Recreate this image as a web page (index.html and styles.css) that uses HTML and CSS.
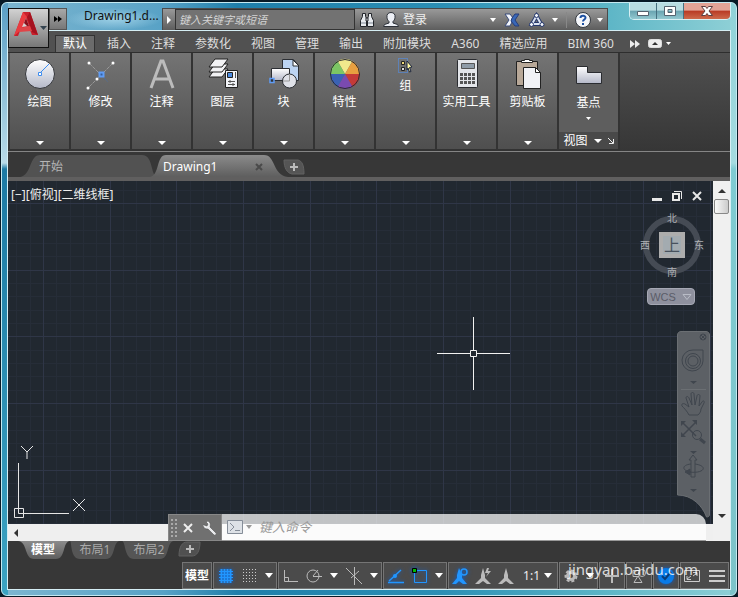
FILE: index.html
```html
<!DOCTYPE html>
<html lang="zh-CN">
<head>
    <meta charset="utf-8">
    <title>Drawing1.dwg</title>
    <link rel="stylesheet" href="styles.css">
</head>
<body>
<div class="window">
    <header class="titlebar">
        <button class="app-btn" aria-label="应用程序">
            <svg width="38" height="38" viewBox="0 0 38 38">
                <path d="M4 27 13 3h7l8 23h-6l-2-5-10 1-2 5z" fill="#c9202c"/>
                <path d="m13 3 4 5-5 12-8 7z" fill="#ea3c40"/>
                <path d="m20 3-3 5 5 15 6 3z" fill="#a5121f"/>
                <path d="m16 9-4 9 7-1z" fill="#d8d0d0"/>
                <path d="m16 9-2 5 3 3 2 0z" fill="#8c101c"/>
                <path d="m10 19 10-2 2 5-13 1z" fill="#e04448"/>
                <path d="M30 17h7l-3.500 4z" fill="#34434f"/>
            </svg>
        </button>
        <button class="quick" aria-label="快速访问">
            <svg width="8" height="8"><path d="M0 1v6l4-3zM4 1v6l4-3z" fill="#000"/></svg>
        </button>
        <h1 class="title">Drawing1.d...</h1>
        <div class="info">
            <button class="expand" aria-label="展开搜索"><svg width="6" height="10"><path d="M1 1v8l4-4z" fill="#fff"/></svg></button>
            <input class="search" type="text" placeholder="键入关键字或短语" aria-label="搜索">
            <button aria-label="查找">
                <svg width="16" height="16" viewBox="0 0 16 16" fill="#e8ebef" stroke="#22252a">
                    <path d="M3.500 1.500h3v3l1 2v8h-6v-6l2-4zM9.500 1.500h3v3l2 4v6h-6v-8l1-2z"/>
                    <path d="M2 11h5M9 11h5" stroke="#7e8794"/><path d="M7 6h2v3H7z"/>
                </svg>
            </button>
            <button class="login">
                <svg width="16" height="16" viewBox="0 0 16 16"><path d="M8 .5c3 0 4.500 2 4 5-.2 2-1 3-2 4v1.500l4.500 1.500 1 2H.5l1-2L6 11V9.500c-1-1-1.800-2-2-4-.5-3 1-5 4-5z" fill="#eceff5" stroke="#2c3038"/></svg>
                <span>登录</span>
            </button>
            <button class="caret-end" aria-label="登录选项"><svg class="caret" width="6" height="4"><path d="M0 0h6L3 4z"/></svg></button>
            <button aria-label="Exchange">
                <svg width="16" height="14" viewBox="0 0 16 14"><path d="M1 1h5l3 4-1 4-2 4H1l4-6z" fill="#f3f6fb" stroke="#3b4c7b"/><path d="M15 1h-4L8 5l-1 3 4 5h4l-4-6z" fill="#3867b8" stroke="#263d79"/></svg>
            </button>
            <button aria-label="A360">
                <svg width="18" height="16" viewBox="0 0 18 16" fill="none"><path d="M8.500 4 4 12h9z" stroke="#27396c" stroke-width="4"/><path d="M8.500 4 4 12h9z" stroke="#dce4f2" stroke-width="2"/><g fill="#f3f6fc" stroke="#27396c"><circle cx="8.500" cy="3.500" r="2"/><circle cx="3.500" cy="12.500" r="2"/><circle cx="14" cy="12.500" r="2"/></g></svg>
                <svg class="caret" width="6" height="4"><path d="M0 0h6L3 4z"/></svg>
            </button>
            <button class="help" aria-label="帮助">
                <svg width="16" height="16" viewBox="0 0 16 16"><circle cx="8" cy="8" r="7.500" fill="#f4f6fa" stroke="#33383f"/><path d="M5.500 6c0-3 5-3 5-.2C10.500 7.500 8 7.500 8 9.500M8 11v2" stroke="#1c4fa0" stroke-width="2" fill="none"/></svg>
                <svg class="caret" width="6" height="4"><path d="M0 0h6L3 4z"/></svg>
            </button>
        </div>
        <div class="win-btns">
            <button aria-label="最小化"><svg width="14" height="12"><path d="M1.500 6.500h11v4h-11z" fill="#fff" stroke="#54626f"/></svg></button>
            <button aria-label="还原"><svg width="14" height="12"><path d="M1.500 1.500h11v9h-11zM5 4.500v3h4v-3z" fill="#fff" fill-rule="evenodd" stroke="#54626f"/></svg></button>
            <button class="win-close" aria-label="关闭"><svg width="14" height="12"><path d="M1.500 1.500h4L7 3.500l1.500-2h4L9 6l3.500 4.500h-4L7 8.500l-1.500 2h-4L5 6z" fill="#fff" stroke="#5d3f40"/></svg></button>
        </div>
    </header>

    <div class="client">
        <nav class="ribbon-tabs">
            <button class="on">默认</button>
            <button>插入</button>
            <button>注释</button>
            <button>参数化</button>
            <button>视图</button>
            <button>管理</button>
            <button>输出</button>
            <button>附加模块</button>
            <button>A360</button>
            <button>精选应用</button>
            <button>BIM 360</button>
            <button class="bare" aria-label="更多"><svg width="10" height="8"><path d="M0 0v8l5-4zM5 0v8l5-4z" fill="#eee"/></svg></button>
            <button class="bare" aria-label="最小化功能区">
                <svg width="14" height="9"><rect x=".5" y=".5" width="13" height="8" rx="2" fill="#eee" stroke="#ddd"/><path d="M4 6h6L7 3z" fill="#333"/></svg>
                <svg class="caret" width="5" height="3"><path d="M0 0h5L2.500 3z"/></svg>
            </button>
        </nav>

        <section class="ribbon">
            <button class="panel">
                <svg width="32" height="32" viewBox="0 0 32 32">
                    <defs><linearGradient id="disc" x2="0" y2="1"><stop stop-color="#fff"/><stop offset="1" stop-color="#b4b8c8"/></linearGradient></defs>
                    <circle cx="16" cy="16" r="14.500" fill="url(#disc)" stroke="#34363a"/><path d="m16 15 9-9" stroke="#3c8cf0"/><path d="M14.500 14.500h3v3h-3z" fill="#fff" stroke="#3c8cf0"/>
                </svg>
                <span>绘图</span>
                <svg class="caret" width="8" height="4"><path d="M0 0h8L4 4z"/></svg>
            </button>
            <button class="panel">
                <svg width="32" height="32" viewBox="0 0 32 32">
                    <path d="m4 5 12 12M28 5 3 30" stroke="#999" stroke-dasharray="4 1"/><path d="m16 17 7 7" stroke="#3a6fb8" stroke-dasharray="1 1"/>
                    <path d="M14.500 14.500h4v4h-4z" fill="#38609c" stroke="#5f9cf5" stroke-width="2"/><g fill="#fff"><circle cx="4" cy="5" r="1.500"/><circle cx="28" cy="5" r="1.500"/><circle cx="12" cy="21" r="1.500"/><circle cx="3" cy="30" r="1.500"/></g>
                </svg>
                <span>修改</span>
                <svg class="caret" width="8" height="4"><path d="M0 0h8L4 4z"/></svg>
            </button>
            <button class="panel">
                <svg width="32" height="32" viewBox="0 0 32 32" fill="none" stroke="#bcbcbc" stroke-width="3"><path d="m5 30 10-27h2l10 27M9 21h14"/></svg>
                <span>注释</span>
                <svg class="caret" width="8" height="4"><path d="M0 0h8L4 4z"/></svg>
            </button>
            <button class="panel">
                <svg width="32" height="32" viewBox="0 0 32 32" stroke="#222">
                    <g fill="#f2f2f4"><path d="m2 19 6-8h13l-6 8z"/><path d="m2 14 6-8h13l-6 8z"/><path d="m2 9 6-8h13l-6 8z"/></g>
                    <path d="M18.500 12.500h12v17h-12z" fill="#f1f3f7"/><path d="M20.500 14.500h5v5h-5z" fill="#4a8ae0"/><path d="M28.500 14v6M21 23.500h7M21 26.500h7M23 22v3M26 25v3" stroke="#555"/>
                </svg>
                <span>图层</span>
                <svg class="caret" width="8" height="4"><path d="M0 0h8L4 4z"/></svg>
            </button>
            <button class="panel">
                <svg width="32" height="32" viewBox="0 0 32 32" stroke="#2b2e33">
                    <path d="M14.500 1.500h11l5 6v15h-16z" fill="#bcd4f3"/><path d="M25 2v6h6z" fill="#fff"/><path d="M3.500 10.500h18v12h-18z" fill="url(#disc)"/>
                    <circle cx="21.500" cy="23" r="7" fill="#dfe1e8"/><path d="M21.500 16v7H15" stroke="#999" fill="none"/><path d="M2 20.500h4v4H2z" fill="#333" stroke="#5f9cf5" stroke-width="1.500"/>
                </svg>
                <span>块</span>
                <svg class="caret" width="8" height="4"><path d="M0 0h8L4 4z"/></svg>
            </button>
            <button class="panel">
                <svg width="32" height="32" viewBox="0 0 32 32">
                    <path d="M16 16 8.500 3h15z" fill="#f1e98c"/><path d="M16 16 23.500 3A15 15 0 0 1 31 16z" fill="#e8a040"/><path d="M16 16h15a15 15 0 0 1-7.500 13z" fill="#c43a38"/>
                    <path d="m16 16 7.500 13a15 15 0 0 1-15 0z" fill="#7a4ab0"/><path d="M16 16 8.500 29A15 15 0 0 1 1 16z" fill="#3a62b4"/><path d="M16 16H1A15 15 0 0 1 8.500 3z" fill="#7cc664"/>
                    <path d="M8.500 3a15 15 0 0 1 15 0z" fill="#f1e98c"/><circle cx="16" cy="16" r="14.500" fill="none" stroke="#2c2c30"/>
                </svg>
                <span>特性</span>
                <svg class="caret" width="8" height="4"><path d="M0 0h8L4 4z"/></svg>
            </button>
            <button class="panel">
                <svg width="16" height="16" viewBox="0 0 16 16">
                    <path d="M.5.500h9v14h-9z" fill="none" stroke="#4d94ff" stroke-dasharray="1 1"/><path d="M3.500 3.500h3v3h-3z" fill="#f0d978" stroke="#222"/><path d="M3.500 9.500h3v3h-3z" fill="#ddd" stroke="#222"/>
                    <path d="m9 3 5 6-2.500.5 1.500 4-1.500.5-1.500-4L9 12z" fill="#fff7a0" stroke="#1c2540"/>
                </svg>
                <span>组</span>
                <svg class="caret" width="8" height="4"><path d="M0 0h8L4 4z"/></svg>
            </button>
            <button class="panel">
                <svg width="32" height="32" viewBox="0 0 32 32">
                    <rect x="6.500" y="1.500" width="20" height="28" rx="1" fill="#e4e6ea" stroke="#2a2c30"/><path d="M10.500 5.500h13v5h-13z" fill="#8f9ca8" stroke="#555"/>
                    <path d="M9 16.500h15M9 20.500h15M9 24.500h15" stroke="#555" stroke-width="3" stroke-dasharray="3 1"/>
                </svg>
                <span>实用工具</span>
                <svg class="caret" width="8" height="4"><path d="M0 0h8L4 4z"/></svg>
            </button>
            <button class="panel">
                <svg width="32" height="32" viewBox="0 0 32 32" stroke="#222">
                    <path d="M4.500 3.500h21v24h-21z" fill="#b8a898"/><path d="M9.500 4.500v-2h3v-1h5v1h3v2z" fill="#fff"/><path d="M11.500 9.500h12l5 5v16h-17z" fill="#f0f1f5"/><path d="M23.500 9.500v5h5z" fill="#fff"/>
                </svg>
                <span>剪贴板</span>
                <svg class="caret" width="8" height="4"><path d="M0 0h8L4 4z"/></svg>
            </button>
            <div class="panel view-panel">
                <button class="base">
                    <svg width="28" height="20" viewBox="0 0 28 20"><path d="M1.500 1.500h11v6h14v11h-25z" fill="url(#disc)" stroke="#2a2c30"/></svg>
                    <span>基点</span>
                    <svg class="caret" width="5" height="3"><path d="M0 0h5L2.500 3z"/></svg>
                </button>
                <button class="view-foot">
                    <span>视图</span>
                    <svg class="caret" width="8" height="4"><path d="M0 0h8L4 4z"/></svg>
                    <svg width="6" height="6"><path d="m0 0 5 5M5.500 1v4.500H1" stroke="#eee" fill="none"/></svg>
                </button>
            </div>
        </section>

        <nav class="doc-tabs">
            <button class="doc">
                <svg width="138" height="22" viewBox="0 0 138 22"><path d="M0 22C12 20 9 0 20 0h102c12 0 8 22 16 22z" fill="#525252"/></svg>
                <span>开始</span>
            </button>
            <button class="doc on">
                <svg width="138" height="22" viewBox="0 0 138 22"><defs><linearGradient id="tab" x2="0" y2="1"><stop stop-color="#8b8b8b"/><stop offset="1" stop-color="#5e5e5e"/></linearGradient></defs><path d="M0 22C10 20 6 0 16 0h98c12 0 8 20 24 22z" fill="url(#tab)"/></svg>
                <span>Drawing1</span>
                <svg class="x" width="8" height="8"><path d="m1 1 6 6M7 1 1 7" stroke="#4a4a4a" stroke-width="2"/></svg>
            </button>
            <button class="add" aria-label="新图形">
                <svg width="22" height="16" viewBox="0 0 22 16"><path d="M1 1h14c4 1 6 5 6 14H9C4 14 1 9 1 1z" fill="#555" stroke="#626262"/><path d="M11 4v8M7 8h8" stroke="#bbb" stroke-width="2"/></svg>
            </button>
        </nav>

        <main class="work">
            <div class="canvas">
                <svg class="grid" width="100%" height="100%">
                    <defs>
                        <pattern id="grid" x="35" y="22" width="200" height="200" patternUnits="userSpaceOnUse">
                            <path d="M13.500 0v200M27.500 0v200M40.500 0v200M53.500 0v200M80.500 0v200M93.500 0v200M107.500 0v200M120.500 0v200M147.500 0v200M160.500 0v200M173.500 0v200M187.500 0v200M0 13.500h200M0 27.500h200M0 40.500h200M0 53.500h200M0 80.500h200M0 93.500h200M0 107.500h200M0 120.500h200M0 147.500h200M0 160.500h200M0 173.500h200M0 187.500h200" stroke="#262d38"/>
                            <path d="M.5 0v200M67.500 0v200M133.500 0v200M0 .5h200M0 67.500h200M0 133.500h200" stroke="#2f3647"/>
                        </pattern>
                    </defs>
                    <rect width="100%" height="100%" fill="url(#grid)"/>
                </svg>
                <div class="vp-label"><button>[−]</button><button>[俯视]</button><button>[二维线框]</button></div>
                <div class="vp-btns">
                    <button aria-label="最小化视口"><svg width="12" height="12"><path d="M1 8h10v3H1z" fill="#e8e8e8"/></svg></button>
                    <button aria-label="还原视口"><svg width="12" height="12" fill="none" stroke="#e8e8e8"><path d="M2 4h6v6H2z" stroke-width="2"/><path d="M3 1.500h7.500V9"/></svg></button>
                    <button aria-label="关闭视口"><svg width="12" height="12"><path d="m2 2 8 8M10 2l-8 8" stroke="#e8e8e8" stroke-width="2"/></svg></button>
                </div>
                <div class="viewcube">
                    <svg width="66" height="66" viewBox="0 0 66 66"><circle cx="33" cy="33" r="26" fill="none" stroke="#454b54" stroke-width="6"/></svg>
                    <span class="north">北</span><span class="west">西</span><button>上</button><span class="east">东</span><span class="south">南</span>
                </div>
                <button class="wcs"><span>WCS</span><svg width="10" height="6"><path d="M1 .5h8l-4 5z" fill="none" stroke="#b9bcc6"/></svg></button>
                <svg class="cross" width="74" height="74" viewBox="0 0 74 74" fill="none" stroke="#f2f2f2"><path d="M0 36.500h33M40 36.500h33M36.500 0v33M36.500 40v33M33.500 33.500h6v6h-6z"/></svg>
                <svg class="ucs" width="76" height="74" viewBox="0 0 76 74" fill="none" stroke="#e6e6e6"><path d="M.5 63.500h9v9h-9zM4.500 18v50.500H55M7 1l6 6 6-6M13 7v7M59 54l12 12M71 54 59 66"/></svg>
            </div>
            <div class="vscroll">
                <svg width="8" height="5"><path d="M0 5h8L4 1z" fill="#333"/></svg>
                <div class="thumb"></div>
                <svg class="down" width="8" height="5"><path d="M0 0h8L4 4z" fill="#333"/></svg>
            </div>
            <div class="hscroll"><svg width="5" height="8"><path d="M5 0v8L1 4z" fill="#333"/></svg></div>

            <svg class="navbar" width="33" height="187" viewBox="0 0 33 187" fill="none" stroke="#40464e">
                <path d="M.5 164V4C.5 2 2 .5 4 .5h25c2 0 3.500 1.500 3.500 3.500v180c0 1-1 2-3 2-4-11-14-22-29-22z" fill="#5c6065" stroke="#6b6f73"/>
                <circle cx="26" cy="6" r="3"/><path d="m24 4 4 4M28 4l-4 4"/><path d="M4 58.500h25" stroke="#6b6f73"/>
                <path d="M16 19h10v11a10.500 10.500 0 1 1-10-11z"/><circle cx="16" cy="30" r="7.500"/><circle cx="16" cy="30" r="5"/>
                <path d="M13 50h7l-3.500 3zM13 120h7l-3.500 3zM13 158h7l-3.500 3z" fill="#40464e" stroke="none"/>
                <path d="M12 84c-2-4-5-7-7-9-1-2 1-3 3-2l4 3-3-9c0-2 2-2 3 0l3 7-1-11c0-2 3-2 3 0l1 11 2-9c0-2 3-2 3 0l-1 10 3-4c1-2 3-1 2 1l-3 6c0 3-2 5-3 6z"/>
                <path d="m6 92 13 13M19 91 6 104" stroke-width="1.500"/><path d="M4 95v-5h5zM15 89h5v5zM4 101v5h5z" fill="#40464e" stroke="none"/><circle cx="20" cy="104" r="4.500"/><path d="m23 108 5 4" stroke-width="3"/>
                <path d="M14 146v-17h-2l4-5 4 5h-2v17z"/><path d="M14 133c-10 1-9 7 0 8h-2M18 133c14 2 9 10-6 8"/><path d="m8 141 5-3v6z" fill="#40464e"/>
            </svg>

            <div class="cmd">
                <div class="cmd-grip">
                    <svg width="6" height="18"><path d="M1 0v18M5 0v18" stroke="#aaa" stroke-width="2" stroke-dasharray="2 2"/></svg>
                    <button aria-label="关闭命令行"><svg width="10" height="10"><path d="m1 1 8 8M9 1 1 9" stroke="#eee" stroke-width="2"/></svg></button>
                    <button aria-label="自定义"><svg width="14" height="14" viewBox="0 0 14 14"><path d="M5 0 3 1l2 2-1 2-3-1-1-1c0 4 2 5 5 5l6 6c1 1 3-1 2-2L7 6c1-3 0-5-2-6z" fill="#e9eaec" stroke="#444" stroke-width=".5"/></svg></button>
                </div>
                <div class="cmd-line">
                    <svg width="16" height="14" viewBox="0 0 16 14" fill="none" stroke="#858d98"><path d="M.5.500h15v13H.5z" fill="#dde1e6"/><path d="m3 3 4 4-4 4M8 10.500h5"/></svg>
                    <svg width="6" height="4"><path d="M0 0h6L3 4z" fill="#999"/></svg>
                    <input type="text" placeholder="键入命令" aria-label="命令">
                </div>
            </div>
        </main>

        <nav class="layouts">
            <button class="on"><svg width="52" height="18" viewBox="0 0 52 18"><path d="M0 0h52c-8 1-4 18-14 18H16C6 18 10 1 0 0z" fill="url(#tab)"/></svg><span>模型</span></button>
            <button><svg width="52" height="18" viewBox="0 0 52 18"><path d="M2 0h50c-8 1-4 18-14 18H12C2 18 4 1 2 0z" fill="#555"/></svg><span>布局1</span></button>
            <button><svg width="52" height="18" viewBox="0 0 52 18"><path d="M0 0h52c-8 1-4 18-14 18H12C2 18 4 1 0 0z" fill="#555"/></svg><span>布局2</span></button>
            <button class="add" aria-label="新建布局"><svg width="24" height="16" viewBox="0 0 24 16"><path d="M1 15C1 6 4 1 9 1h13c0 9-3 14-8 14z" fill="#505050" stroke="#606060"/><path d="M12 4v8M8 8h8" stroke="#bbb" stroke-width="2"/></svg></button>
        </nav>

        <footer class="status">
            <div class="group"><button class="model">模型</button></div>
            <div class="group">
                <button aria-label="栅格"><svg class="lit" width="18" height="16" viewBox="0 0 18 16"><path d="M4.500 1v14M7.500 1v14M10.500 1v14M13.500 1v14" stroke="#2196ff" stroke-width="2"/><path d="M2 3.500h14M2 6.500h14M2 9.500h14M2 12.500h14" stroke="#2196ff"/></svg></button>
                <button aria-label="捕捉"><svg width="16" height="16" viewBox="0 0 16 16"><path d="M1 1.500h14M1 4.500h14M1 7.500h14M1 10.500h14M1 13.500h14" stroke="#ccc" stroke-dasharray="1 2"/></svg></button>
                <button aria-label="捕捉选项"><svg class="caret" width="8" height="5"><path d="M0 0h8L4 5z"/></svg></button>
            </div>
            <div class="group">
                <button aria-label="正交"><svg width="16" height="16" viewBox="0 0 16 16" fill="none" stroke="#bbb"><path d="M2.500 2v11.500H16M2.500 9.500h4v4"/></svg></button>
                <button aria-label="极轴"><svg width="18" height="16" viewBox="0 0 18 16" fill="none" stroke="#bbb"><circle cx="8" cy="8" r="6"/><path d="M8 8.500h9M8 8l5-6"/></svg></button>
                <button aria-label="极轴选项"><svg class="caret" width="8" height="5"><path d="M0 0h8L4 5z"/></svg></button>
                <button aria-label="等轴测"><svg width="18" height="18" viewBox="0 0 18 18" fill="none" stroke="#bbb"><path d="m1 1 16 16M9.500 0v18M6 11l8-7"/></svg></button>
                <button aria-label="等轴测选项"><svg class="caret" width="8" height="5"><path d="M0 0h8L4 5z"/></svg></button>
            </div>
            <div class="group">
                <button aria-label="追踪"><svg class="lit" width="18" height="16" viewBox="0 0 18 16"><path d="M1 14.500h16M2 13 14 2" stroke="#2196ff" stroke-width="1.500"/><circle cx="8" cy="8" r="2" fill="#2196ff"/></svg></button>
                <button aria-label="对象捕捉"><svg class="lit" width="16" height="16" viewBox="0 0 16 16"><path d="M2.500 2.500h12v12h-12z" fill="none" stroke="#2196ff"/><path d="M.5.500h4v4h-4z" fill="#0b0" stroke="#000"/></svg></button>
                <button aria-label="捕捉设置"><svg class="caret" width="8" height="5"><path d="M0 0h8L4 5z"/></svg></button>
            </div>
            <div class="group">
                <button aria-label="注释可见性"><svg class="lit" width="16" height="18" viewBox="0 0 16 18"><path d="M7 1 5 8v3l-5 6h4l3-3 4 3h4l-5-6V8z" fill="#2196ff"/><circle cx="12" cy="5" r="3" fill="none" stroke="#2196ff" stroke-width="1.500"/></svg></button>
                <button aria-label="自动缩放"><svg width="16" height="18" viewBox="0 0 16 18"><path d="M8 1 6 8v3l-6 6h4l4-3 4 3h4l-6-6V8zM12 1l-2 5h3l-2 4 5-6h-3l1-3z" fill="#bbb"/></svg></button>
                <button aria-label="注释比例"><svg width="16" height="18" viewBox="0 0 16 18"><path d="M8 1 6 8v3l-6 6h4l4-3 4 3h4l-6-6V8z" fill="#bbb"/></svg></button>
                <button class="scale"><span>1:1</span><svg class="caret" width="8" height="5"><path d="M0 0h8L4 5z"/></svg></button>
            </div>
            <div class="group">
                <button aria-label="工作空间"><svg width="16" height="16" viewBox="0 0 16 16"><circle cx="8" cy="8" r="3.500" fill="none" stroke="#bbb" stroke-width="3"/><circle cx="8" cy="8" r="5.500" fill="none" stroke="#bbb" stroke-width="2" stroke-dasharray="3 2"/></svg></button>
                <button aria-label="工作空间选项"><svg class="caret" width="8" height="5"><path d="M0 0h8L4 5z"/></svg></button>
            </div>
            <div class="group solo"><button aria-label="注释监视器"><svg width="16" height="16"><path d="M8 1v14M1 8h14" stroke="#bbb" stroke-width="2"/></svg></button></div>
            <div class="group solo"><button aria-label="隔离对象"><svg width="16" height="16" viewBox="0 0 16 16" fill="none" stroke="#bbb"><circle cx="11" cy="5" r="3.500"/><path d="M2 2.500h6v6H2zM7 8l-4 6.500h8z"/></svg></button></div>
            <div class="group solo"><button aria-label="硬件加速"><svg class="lit" width="16" height="16" viewBox="0 0 16 16"><circle cx="8" cy="8" r="8" fill="#087be8"/><path d="m4 8 3 3 6-7" fill="none" stroke="#0a3e78" stroke-width="2"/></svg></button></div>
            <div class="group">
                <button aria-label="全屏"><svg width="16" height="14" viewBox="0 0 16 14" fill="none" stroke="#ccc"><path d="M.5 1.500h15v11H.5zM3 10l4-3M9 7l4-3M3 7v3.500h4M9 3.500h4V7"/></svg></button>
                <button aria-label="自定义"><svg width="16" height="14"><path d="M0 2h16M0 7h16M0 12h16" stroke="#ccc" stroke-width="2"/></svg></button>
            </div>
        </footer>
    </div>
    <div class="mark">jingyan.baidu.com</div>
</div>
</body>
</html>
```

FILE: styles.css
```css
* {
    box-sizing: border-box;
}

body {
    margin: 0;
    min-height: 100vh;
    display: flex;
    background: #081a26;
    font: 12px/16px "Noto Sans", "Noto Sans CJK SC", sans-serif;
    color: #eee;
}

button, input {
    font: inherit;
    color: inherit;
    border: 0;
    padding: 0;
    margin: 0;
    background: none;
}

button {
    display: flex;
    align-items: center;
    justify-content: center;
    white-space: nowrap;
}

svg {
    display: block;
    flex: none;
}

.caret {
    fill: #fff;
}

.window {
    position: relative;
    flex: 1;
    min-width: 0;
    display: flex;
    flex-direction: column;
    margin: 2px 1px 1px;
    padding: 0 5px 5px;
    border: 1px solid #c4e9f1;
    border-radius: 6px;
    background:
        linear-gradient(#5a9ec4, #b9dbe8 160px, #1d7aa4 166px, #3ba3c2) left / 6px 100% no-repeat,
        linear-gradient(#8fd2d8, #a5dbe0 160px, #7fcbd2 166px, #7cc3c9) right / 6px 100% no-repeat,
        linear-gradient(90deg, #7db6d0, #58a2c6 22%, #1f7faa 32%, #2b8fb4 60%, #5cb5c6 82%, #8fd0d6);
}

/* title bar */
.titlebar {
    display: flex;
    align-items: flex-end;
    height: 27px;
    padding-left: 1px;
}

.app-btn {
    position: relative;
    z-index: 1;
    width: 41px;
    height: 40px;
    margin-bottom: -18px;
    border: 1px solid #111;
    background: linear-gradient(#d2d2d2, #777);
}

.quick {
    width: 18px;
    height: 22px;
    border: 1px solid #555;
    background: linear-gradient(#a8a8a8, #777);
}

.title {
    flex: 0 0 95px;
    height: 22px;
    margin: 0;
    padding-left: 17px;
    font-size: 12px;
    font-weight: normal;
    line-height: 16px;
    color: #111;
    white-space: nowrap;
    background: radial-gradient(closest-side, #9dd0e6, transparent);
}

.info {
    flex: 0 1 446px;
    min-width: 0;
    height: 22px;
    display: flex;
    align-items: center;
    gap: 8px;
    padding-right: 4px;
    border: 1px solid #4a4a4a;
    border-bottom: 0;
    background: linear-gradient(#999, #5d5d5d);
}

.info button {
    gap: 6px;
}

.info .expand {
    width: 12px;
    margin-right: -8px;
}

.info .login {
    gap: 4px;
}

.search {
    flex: 0 1 180px;
    min-width: 0;
    height: 21px;
    padding: 0 3px;
    margin-right: -4px;
    border: 1px solid #333;
    background: #727272;
    font-size: 11px;
    font-style: italic;
}

.search::placeholder {
    color: #d4d4d4;
    opacity: 1;
}

.caret-end {
    margin-left: auto;
}

.info .help {
    padding-left: 8px;
    border-left: 1px solid #888;
}

.win-btns {
    align-self: flex-start;
    display: flex;
    flex: none;
    margin-left: auto;
    border: 1px solid #d8f0f4;
    border-top: 0;
    border-radius: 0 0 5px 5px;
    overflow: hidden;
}

.win-btns button {
    width: 27px;
    height: 16px;
    border-right: 1px solid #456f80;
    background: linear-gradient(#b9dde2 45%, #69a4b1 50%, #92c8d0);
}

.win-btns .win-close {
    width: 46px;
    border: 0;
    background: linear-gradient(#e2a396 45%, #b93a24 50%, #cd6a4c);
}

/* client area */
.client {
    flex: 1;
    display: flex;
    flex-direction: column;
    border: 1px solid #d5eef4;
    background: #373737;
}

.ribbon-tabs {
    display: flex;
    gap: 4px;
    height: 22px;
    padding: 4px 0 0 47px;
    background: #515151;
    border-bottom: 1px solid #2e2e2e;
}

.ribbon-tabs button {
    padding: 0 8px;
    color: #ddd;
}

.ribbon-tabs .on {
    color: #fff;
    background: #6b6b6b;
    border: 1px solid #333;
    border-bottom: 0;
    padding: 0 7px;
}

.ribbon-tabs .bare {
    padding: 0 0 0 4px;
    gap: 4px;
}

/* ribbon panels */
.ribbon {
    display: flex;
    height: 99px;
    padding-left: 2px;
    border-bottom: 1px solid #858585;
    background: linear-gradient(#505050, #363636);
}

.panel {
    flex: 0 1 61px;
    min-width: 0;
    display: flex;
    flex-direction: column;
    justify-content: flex-start;
    gap: 4px;
    padding: 5px 0 4px;
    border: 1px solid #333;
    border-width: 0 2px 2px 0;
    background: linear-gradient(#747474, #4f4f4f);
    color: #fff;
}

.panel > .caret {
    margin-top: auto;
}

.view-panel {
    padding: 0;
    background: #5e5e5e;
}

.base {
    flex: 1;
    flex-direction: column;
    padding-top: 4px;
    gap: 6px;
}

.base span {
    margin-top: 4px;
}

.view-foot {
    gap: 6px;
    height: 17px;
    background: #494949;
}

/* drawing tabs */
.doc-tabs {
    display: flex;
    align-items: flex-end;
    height: 29px;
    padding-left: 12px;
    border-bottom: 4px solid #605f5f;
}

.doc {
    position: relative;
    width: 130px;
    height: 22px;
    justify-content: flex-start;
    padding: 2px 0 0 19px;
    color: #b5b5b5;
}

.doc.on {
    color: #fff;
    padding-left: 13px;
}

.doc > svg:first-child {
    position: absolute;
    left: 0;
    top: 0;
}

.doc span, .doc .x {
    position: relative;
}

.doc .x {
    margin-left: 38px;
}

.doc-tabs .add {
    padding: 0 0 2px 3px;
}

/* drawing area */
.work {
    flex: 1;
    position: relative;
    display: grid;
    grid-template: 1fr 17px / 1fr 17px;
    min-height: 340px;
    background: #efefef;
}

.canvas {
    position: relative;
    background: #212830;
}

.grid {
    position: absolute;
    inset: 0;
}

.vp-label {
    position: absolute;
    left: 3px;
    top: 6px;
    display: flex;
}

.vp-btns {
    position: absolute;
    top: 9px;
    right: 10px;
    display: flex;
    gap: 8px;
}

.viewcube {
    position: absolute;
    top: 31px;
    right: 8px;
    color: #aeb0b4;
    font-size: 10px;
    line-height: 12px;
}

.viewcube span, .viewcube button {
    position: absolute;
}

.viewcube .north {
    left: 28px;
    top: 0;
}

.viewcube .south {
    left: 28px;
    bottom: 0;
}

.viewcube .west {
    left: 1px;
    top: 27px;
}

.viewcube .east {
    right: 1px;
    top: 27px;
}

.viewcube button {
    left: 20px;
    top: 20px;
    width: 26px;
    height: 26px;
    border: 4px solid #adadad;
    background: #a3abb0;
    color: #48525d;
    font-size: 16px;
}

.wcs {
    position: absolute;
    top: 107px;
    right: 18px;
    width: 48px;
    height: 17px;
    gap: 6px;
    border: 1px solid #a6a8b4;
    border-radius: 4px;
    background: #8e909d;
    color: #5a5c68;
    font: 11px/14px "Liberation Sans", sans-serif;
}

.cross {
    position: absolute;
    left: 429px;
    top: 136px;
}

.ucs {
    position: absolute;
    left: 6px;
    bottom: 5px;
}

.vscroll {
    display: flex;
    flex-direction: column;
    align-items: center;
    gap: 6px;
    padding: 7px 0 6px;
    grid-row: span 2;
    background: #f0f0f0;
}

.thumb {
    width: 15px;
    height: 15px;
    border: 1px solid #888;
    border-radius: 2px;
    background: linear-gradient(90deg, #fafafa, #ccc);
}

.vscroll .down {
    margin: auto 0 16px;
}

.hscroll {
    display: flex;
    align-items: center;
    padding-left: 5px;
}

.navbar {
    position: absolute;
    right: 20px;
    top: 150px;
}

.cmd {
    position: absolute;
    left: 160px;
    right: 24px;
    bottom: 0;
    height: 27px;
    display: flex;
}

.cmd-grip {
    display: flex;
    align-items: center;
    gap: 6px;
    width: 54px;
    padding-left: 2px;
    background: #707070;
    border: 1px solid #888;
}

.cmd-grip button:last-child {
    margin-left: 4px;
}

.cmd-line {
    flex: 1;
    min-width: 0;
    display: flex;
    align-items: center;
    gap: 3px;
    padding-left: 5px;
    background: rgba(255, 255, 255, .72);
    border-bottom: 1px solid #999;
    border-radius: 0 10px 0 0;
}

.cmd-line input {
    flex: 1;
    min-width: 0;
    padding-left: 4px;
    font-size: 13px;
    font-style: italic;
    color: #555;
}

.cmd-line input::placeholder {
    color: #999;
    opacity: 1;
}

/* layout tabs */
.layouts {
    display: flex;
    height: 21px;
    padding-left: 10px;
}

.layouts button {
    position: relative;
    width: 54px;
    height: 18px;
    color: #aaa;
}

.layouts button > svg {
    position: absolute;
    left: 0;
    top: 0;
}

.layouts span {
    position: relative;
}

.layouts .on {
    width: 50px;
    color: #fff;
    font-weight: bold;
}

.layouts .add {
    width: 24px;
    margin-left: 2px;
}

/* status bar */
.status {
    display: flex;
    justify-content: flex-end;
    height: 27px;
    padding-right: 1px;
}

.group {
    display: flex;
    align-items: center;
    gap: 7px;
    padding: 0 3px;
    margin-left: 1px;
    border: 1px solid #757575;
    background: #4b4b4b;
}

.group:first-child {
    padding: 0 2px;
}

.solo {
    padding: 0 4px;
}

.model {
    font-weight: bold;
    color: #fff;
}

.scale {
    gap: 4px;
    padding: 0 2px;
}

.group:last-child {
    gap: 9px;
}

.lit {
    filter: drop-shadow(0 0 2px #0a5fd0);
}

.mark {
    position: absolute;
    right: 38px;
    bottom: 17px;
    font: 15px/18px "Noto Sans", sans-serif;
    color: rgba(255, 255, 255, .8);
}
```
